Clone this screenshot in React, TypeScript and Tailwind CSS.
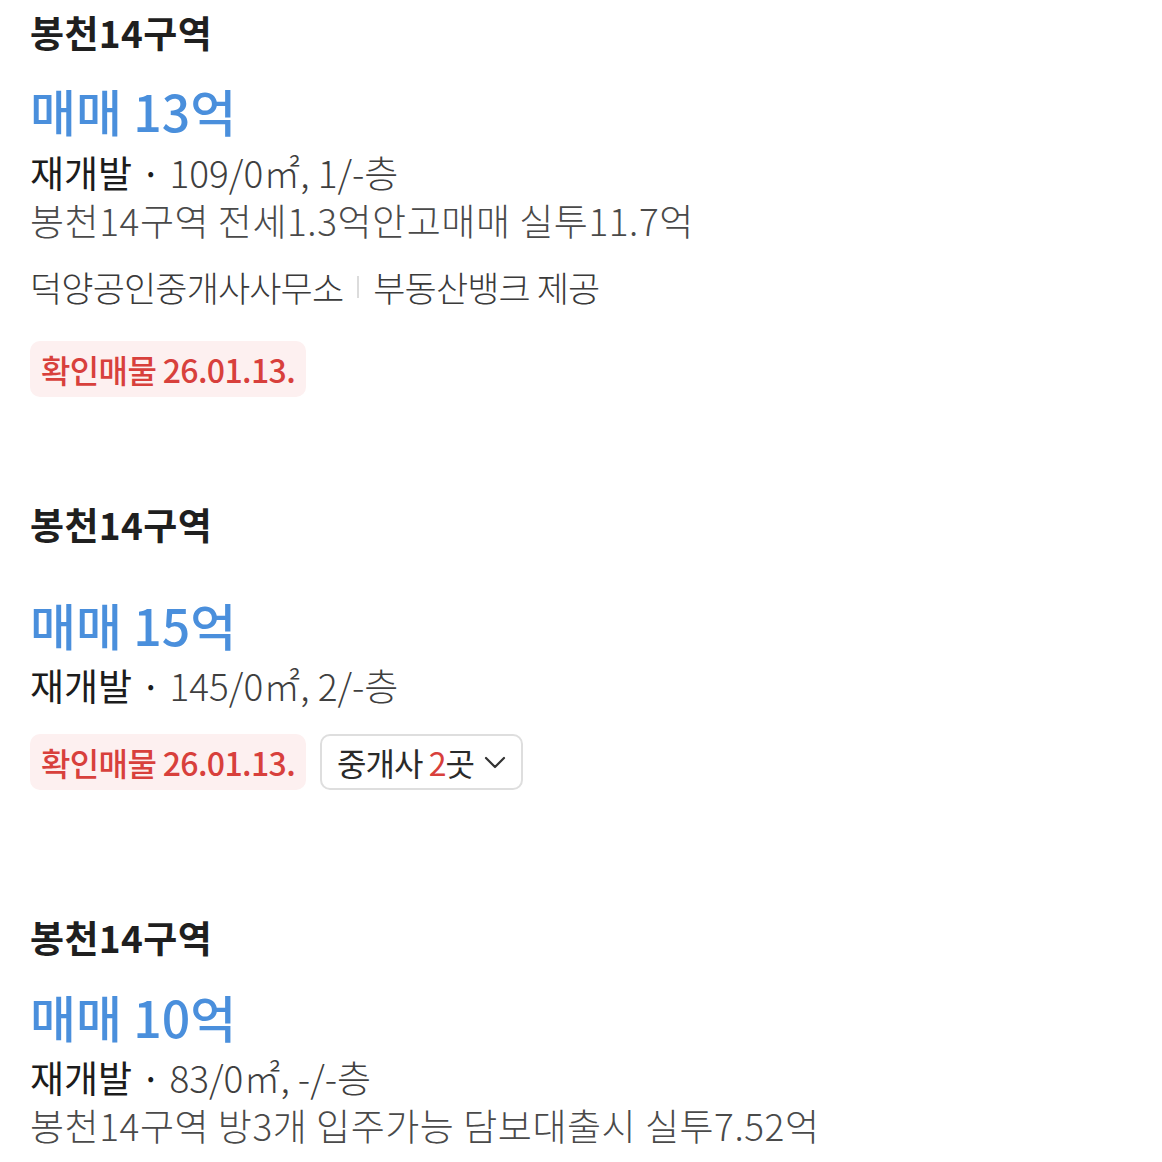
import React from "react";

const FONT = "font-['Noto_Sans_CJK_KR','Noto_Sans',sans-serif]";

const Title: React.FC<{ className?: string }> = ({ className = "" }) => (
    <div className={`h-[48px] leading-[48px] text-[37px] font-bold text-[#1f1f1f] tracking-[0.01em] ${className}`}>
        봉천14구역
    </div>
);

const Price: React.FC<{ value: string; className?: string }> = ({ value, className = "" }) => (
    <div className={`h-[60px] leading-[60px] text-[50px] font-medium text-[#4a8fdc] ${className}`}>
        매매 {value}
    </div>
);

const Spec: React.FC<{ text: string }> = ({ text }) => (
    <div className="h-[48px] leading-[48px] text-[37px]">
        <span className="text-[#1c1c1c]">재개발 · </span>
        <span className="text-[#3f3f3f] font-light">{text}</span>
    </div>
);

const Desc: React.FC<{ text: string }> = ({ text }) => (
    <div className="h-[48px] leading-[48px] text-[37px] font-light text-[#4a4a4a] tracking-[0.015em]">
        {text}
    </div>
);

const Verified: React.FC = () => (
    <div className="h-[56px] px-[11px] rounded-[10px] bg-[#fdf0f0] flex items-center text-[32px] font-medium text-[#d8403c] tracking-[-0.02em]">
        확인매물 26.01.13.
    </div>
);

export default function App() {
    return (
        <div className={`${FONT} bg-white min-h-[1162px] pl-[30px] pt-[8px]`}>
            {/* listing 1 */}
            <Title />
            <Price value="13억" className="mt-[24px]" />
            <div className="mt-[8px]">
                <Spec text="109/0㎡, 1/-층" />
                <Desc text="봉천14구역 전세1.3억안고매매 실투11.7억" />
            </div>
            <div className="mt-[19px] h-[48px] flex items-center text-[35px] font-light text-[#3a3a3a] tracking-[-0.025em]">
                <span>덕양공인중개사사무소</span>
                <span className="mx-[14px] w-[2px] h-[22px] bg-[#dcdcdc]" />
                <span>부동산뱅크 제공</span>
            </div>
            <div className="mt-[30px] flex">
                <Verified />
            </div>

            {/* listing 2 */}
            <Title className="mt-[103px]" />
            <Price value="15억" className="mt-[46px]" />
            <div className="mt-[7px]">
                <Spec text="145/0㎡, 2/-층" />
            </div>
            <div className="mt-[25px] flex gap-[14px]">
                <Verified />
                <button className="h-[56px] pl-[15px] pr-[14px] rounded-[10px] border-2 border-[#dedede] flex items-center gap-[9px] text-[32px] text-[#2a2a2a] tracking-[-0.03em]">
                    <span>
                        중개사 <span className="text-[#d8403c]">2</span>곳
                    </span>
                    <svg width="24" height="16" viewBox="0 0 24 16" fill="none" stroke="#333" strokeWidth="2.2" strokeLinecap="round" strokeLinejoin="round">
                        <path d="M3 4l9 9 9-9" />
                    </svg>
                </button>
            </div>

            {/* listing 3 */}
            <Title className="mt-[123px]" />
            <Price value="10억" className="mt-[25px]" />
            <div className="mt-[7px]">
                <Spec text="83/0㎡, -/-층" />
                <Desc text="봉천14구역 방3개 입주가능 담보대출시 실투7.52억" />
            </div>
        </div>
    );
}
